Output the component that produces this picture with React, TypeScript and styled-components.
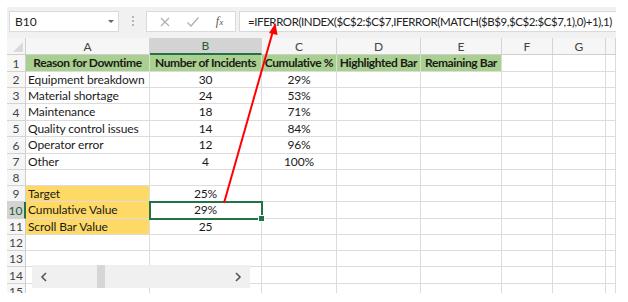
import React from "react";
import styled, { createGlobalStyle } from "styled-components";

const Global = createGlobalStyle`
  html, body { margin: 0; padding: 0; background: #ffffff; }
  body { font-family: "Lato", "Liberation Sans", sans-serif; }
`;

const Page = styled.div`
  position: relative;
  width: 628px;
  height: 302px;
  overflow: hidden;
  background: #fff;
`;

const Frame = styled.div`
  position: absolute;
  left: 7px;
  top: 7px;
  width: 609px;
  height: 286px;
  display: flex;
  flex-direction: column;
  overflow: hidden;
`;

const FormulaBar = styled.div`
  flex: 0 0 31px;
  height: 31px;
  background: #f1f1f1;
  display: flex;
  align-items: flex-start;
  padding-top: 4px;
  box-sizing: border-box;
`;

const NameBox = styled.div`
  margin-left: 2px;
  width: 110px;
  height: 21px;
  background: #fff;
  border: 1px solid #dadada;
  box-sizing: border-box;
  display: flex;
  align-items: center;
  justify-content: space-between;
  padding: 0 4px 0 5px;
  font-size: 12px;
  color: #222;
`;

const Caret = styled.span`
  width: 0;
  height: 0;
  border-left: 3px solid transparent;
  border-right: 3px solid transparent;
  border-top: 3px solid #666;
`;

const Dots = styled.div`
  width: 27px;
  display: flex;
  flex-direction: column;
  align-items: center;
  gap: 2px;
  padding-top: 5px;
  & > span { width: 2px; height: 2px; background: #b5b5b5; }
`;

const IconBox = styled.div`
  width: 90px;
  height: 21px;
  background: #fff;
  border: 1px solid #dadada;
  box-sizing: border-box;
  display: flex;
  align-items: center;
  justify-content: space-around;
  padding: 0 4px;
`;

const Fx = styled.span`
  font-family: "Liberation Serif", serif;
  font-style: italic;
  font-size: 12px;
  color: #555;
  & > small { font-size: 9px; }
`;

const FormulaInput = styled.div`
  margin-left: 3px;
  flex: 1;
  height: 21px;
  background: #fff;
  border: 1px solid #dadada;
  border-right: none;
  box-sizing: border-box;
  padding-left: 8px;
  display: flex;
  align-items: center;
  font-size: 11.5px;
  letter-spacing: -0.42px;
  color: #222;
  white-space: nowrap;
  overflow: hidden;
`;

const Sheet = styled.div`
  flex: 0 0 auto;
  display: grid;
  grid-template-columns: 19px 124px 112px 75px 84px 81px 51px 53px 10px;
  grid-template-rows: 17px 17px 16px 16px 17px 16px 17px 16px 16px 16px 17px 16px 16px 16px 17px 16px;
  background: #fff;
`;

const Cell = styled.div<{ $fill?: string; $align?: string; $bold?: boolean }>`
  border-right: 1px solid #dcdcdc;
  border-bottom: 1px solid #dcdcdc;
  box-sizing: border-box;
  background: ${(p) => p.$fill || "#fff"};
  font-size: 12px;
  font-weight: ${(p) => (p.$bold ? 700 : 400)};
  letter-spacing: ${(p) => (p.$bold ? "-0.4px" : "-0.1px")};
  color: #1a1a1a;
  display: flex;
  align-items: center;
  justify-content: ${(p) => (p.$align === "center" ? "center" : "flex-start")};
  padding-left: ${(p) => (p.$align === "center" ? "0" : "2px")};
  white-space: nowrap;
  overflow: visible;
  line-height: 1;
  position: relative;
`;

const ColHead = styled.div<{ $sel?: boolean }>`
  background: ${(p) => (p.$sel ? "#d3d3d3" : "#f6f6f6")};
  border-right: 1px solid #d4d4d4;
  border-bottom: ${(p) => (p.$sel ? "2px solid #217346" : "1px solid #cfcfcf")};
  box-sizing: border-box;
  font-size: 12px;
  color: ${(p) => (p.$sel ? "#1e5e3a" : "#444")};
  display: flex;
  align-items: center;
  justify-content: center;
`;

const RowHead = styled.div<{ $sel?: boolean }>`
  background: ${(p) => (p.$sel ? "#d3d3d3" : "#f6f6f6")};
  border-right: ${(p) => (p.$sel ? "2px solid #217346" : "1px solid #cfcfcf")};
  border-bottom: 1px solid #d4d4d4;
  box-sizing: border-box;
  font-size: 12px;
  color: ${(p) => (p.$sel ? "#1e5e3a" : "#444")};
  display: flex;
  align-items: center;
  justify-content: center;
`;

const Corner = styled.div`
  background: #f6f6f6;
  border-right: 1px solid #cfcfcf;
  border-bottom: 1px solid #cfcfcf;
  box-sizing: border-box;
  position: relative;
  &::after {
    content: "";
    position: absolute;
    right: 2px;
    bottom: 2px;
    width: 0;
    height: 0;
    border-left: 10px solid transparent;
    border-bottom: 10px solid #dadada;
  }
`;

const Selection = styled.div`
  position: absolute;
  left: 149px;
  top: 201px;
  width: 114px;
  height: 19px;
  border: 2px solid #217346;
  box-sizing: border-box;
  pointer-events: none;
  &::after {
    content: "";
    position: absolute;
    right: -4px;
    bottom: -4px;
    width: 5px;
    height: 5px;
    background: #217346;
    border: 1px solid #fff;
  }
`;

const ScrollBar = styled.div`
  position: absolute;
  left: 32px;
  top: 265px;
  width: 218px;
  height: 23px;
  background: #f0f0f0;
  display: flex;
  align-items: center;
`;

const ScrollBtn = styled.div`
  width: 24px;
  height: 23px;
  display: flex;
  align-items: center;
  justify-content: center;
`;

const Track = styled.div`
  flex: 1;
  height: 23px;
  position: relative;
`;

const Thumb = styled.div`
  position: absolute;
  left: 41px;
  top: 0;
  width: 8px;
  height: 23px;
  background: #d6d6d6;
`;

const Overlay = styled.svg`
  position: absolute;
  left: 0;
  top: 0;
  pointer-events: none;
`;

const cols = ["A", "B", "C", "D", "E", "F", "G", ""];

type Row = { a?: string; b?: string; c?: string; head?: boolean; yellow?: boolean };

const rows: Row[] = [
  { head: true },
  { a: "Equipment breakdown", b: "30", c: "29%" },
  { a: "Material shortage", b: "24", c: "53%" },
  { a: "Maintenance", b: "18", c: "71%" },
  { a: "Quality control issues", b: "14", c: "84%" },
  { a: "Operator error", b: "12", c: "96%" },
  { a: "Other", b: "4", c: "100%" },
  {},
  { a: "Target", b: "25%", yellow: true },
  { a: "Cumulative Value", b: "29%", yellow: true },
  { a: "Scroll Bar Value", b: "25", yellow: true },
  {},
  {},
  {},
  {},
];

const headers = ["Reason for Downtime", "Number of Incidents", "Cumulative %", "Highlighted Bar", "Remaining Bar"];

export default function App() {
  return (
    <Page>
      <Global />
      <Frame>
        <FormulaBar>
          <NameBox>
            <span>B10</span>
            <Caret />
          </NameBox>
          <Dots>
            <span />
            <span />
            <span />
          </Dots>
          <IconBox>
            <svg width="12" height="12" viewBox="0 0 12 12">
              <path d="M2 2 L10 10 M10 2 L2 10" stroke="#b0b0b0" strokeWidth="1.3" fill="none" />
            </svg>
            <svg width="14" height="12" viewBox="0 0 14 12">
              <path d="M1.5 6.5 L5 10 L12.5 1.5" stroke="#b0b0b0" strokeWidth="1.3" fill="none" />
            </svg>
            <Fx>
              f<small>x</small>
            </Fx>
          </IconBox>
          <FormulaInput>=IFERROR(INDEX($C$2:$C$7,IFERROR(MATCH($B$9,$C$2:$C$7,1),0)+1),1)</FormulaInput>
        </FormulaBar>
        <Sheet>
          <Corner />
          {cols.map((c, i) => (
            <ColHead key={i} $sel={c === "B"}>
              {c}
            </ColHead>
          ))}
          {rows.map((r, ri) => {
            const n = ri + 1;
            return (
              <React.Fragment key={ri}>
                <RowHead $sel={n === 10}>{n}</RowHead>
                {r.head
                  ? cols.map((_, ci) => (
                      <Cell
                        key={ci}
                        $bold
                        $align="center"
                        $fill={ci < 5 ? "#a9d08e" : undefined}
                      >
                        {headers[ci] || ""}
                      </Cell>
                    ))
                  : cols.map((_, ci) => {
                      if (ci === 0)
                        return (
                          <Cell key={ci} $fill={r.yellow ? "#ffd966" : undefined}>
                            {r.a}
                          </Cell>
                        );
                      if (ci === 1)
                        return (
                          <Cell key={ci} $align="center">
                            {r.b}
                          </Cell>
                        );
                      if (ci === 2)
                        return (
                          <Cell key={ci} $align="center">
                            {r.c}
                          </Cell>
                        );
                      return <Cell key={ci} />;
                    })}
              </React.Fragment>
            );
          })}
        </Sheet>
      </Frame>
      <Selection />
      <ScrollBar>
        <ScrollBtn>
          <svg width="8" height="10" viewBox="0 0 8 10">
            <path d="M6 1 L2 5 L6 9" stroke="#555" strokeWidth="1.6" fill="none" />
          </svg>
        </ScrollBtn>
        <Track>
          <Thumb />
        </Track>
        <ScrollBtn>
          <svg width="8" height="10" viewBox="0 0 8 10">
            <path d="M2 1 L6 5 L2 9" stroke="#555" strokeWidth="1.6" fill="none" />
          </svg>
        </ScrollBtn>
      </ScrollBar>
      <Overlay width="628" height="302" viewBox="0 0 628 302">
        <line x1="224" y1="203" x2="273" y2="31" stroke="#ff0000" strokeWidth="2" />
        <polygon points="275.5,23 269,33 277.5,35" fill="#ff0000" />
      </Overlay>
    </Page>
  );
}
